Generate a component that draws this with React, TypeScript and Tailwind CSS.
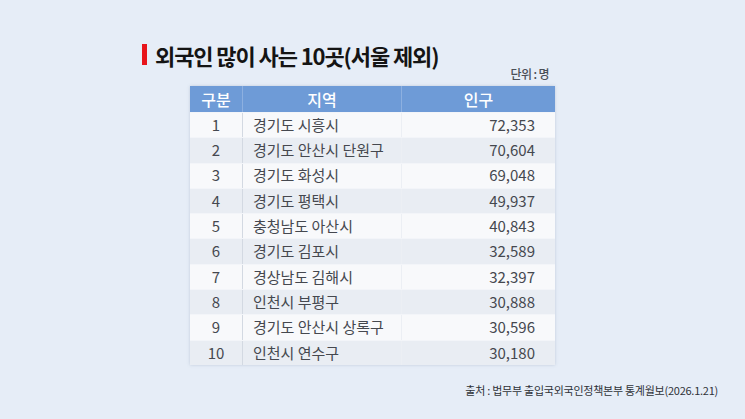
import React from "react";

const rows: [string, string, string][] = [
  ["1", "경기도 시흥시", "72,353"],
  ["2", "경기도 안산시 단원구", "70,604"],
  ["3", "경기도 화성시", "69,048"],
  ["4", "경기도 평택시", "49,937"],
  ["5", "충청남도 아산시", "40,843"],
  ["6", "경기도 김포시", "32,589"],
  ["7", "경상남도 김해시", "32,397"],
  ["8", "인천시 부평구", "30,888"],
  ["9", "경기도 안산시 상록구", "30,596"],
  ["10", "인천시 연수구", "30,180"],
];

export default function App() {
  return (
    <div
      className="w-[745px] h-[419px] bg-[#e6edf7] flex flex-col overflow-hidden"
      style={{ fontFamily: '"Noto Sans CJK KR", "Noto Sans", sans-serif' }}
    >
      <div className="flex items-center pl-[142px] pt-[43px] h-[66px]">
        <div className="w-[5px] h-[21px] bg-[#e8141b]" />
        <div className="ml-[8px] text-[22px] font-bold text-[#141414] tracking-[-1.1px] leading-none">
          외국인 많이 사는 10곳(서울 제외)
        </div>
      </div>
      <div className="flex justify-end pr-[196px] pt-[2px] h-[17px] items-start">
        <span className="text-[12px] text-[#4a4f58] font-medium tracking-[-0.6px] leading-none">단위 : 명</span>
      </div>
      <div className="ml-[190px] mt-[3px] w-[365px] shadow-[0_0_3px_rgba(120,140,170,0.35)]">
        <div className="flex h-[26px] bg-[#6e9bd7] text-white text-[16px] font-medium items-center">
          <div className="w-[53px] text-center border-r border-[#8db0e0] h-full flex items-center justify-center">구분</div>
          <div className="w-[159px] text-center border-r border-[#8db0e0] h-full flex items-center justify-center">지역</div>
          <div className="flex-1 text-center">인구</div>
        </div>
        {rows.map((r, i) => (
          <div
            key={r[0]}
            className={
              "flex h-[25.3px] items-center text-[15px] text-[#45484f] border-t border-[#f3f5f9] " +
              (i % 2 === 0 ? "bg-[#f8f9fb]" : "bg-[#e9edf3]")
            }
          >
            <div className="w-[53px] h-full flex items-center justify-center border-r border-[#d3d9e2]">{r[0]}</div>
            <div className="w-[159px] h-full flex items-center pl-[10px] border-r border-[#eceff4]">{r[1]}</div>
            <div className="flex-1 h-full flex items-center justify-end pr-[20px]">{r[2]}</div>
          </div>
        ))}
      </div>
      <div className="flex justify-end pr-[27px] mt-[17px]">
        <span className="text-[11px] text-[#2f3238] tracking-[-0.25px]">
          출처 : 법무부 출입국외국인정책본부 통계월보(2026.1.21)
        </span>
      </div>
    </div>
  );
}
